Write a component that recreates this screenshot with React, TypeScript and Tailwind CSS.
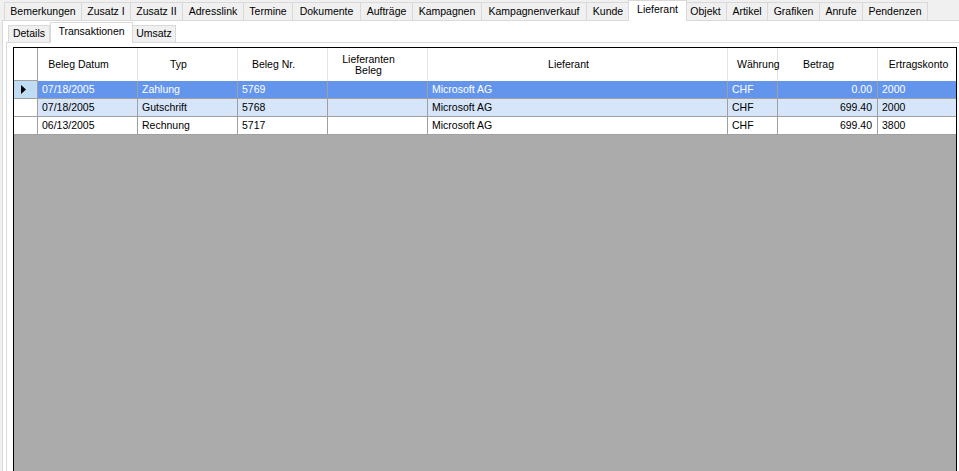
import React from "react";

const topTabs: [string, number][] = [
  ["Bemerkungen", 78],
  ["Zusatz I", 49],
  ["Zusatz II", 52],
  ["Adresslink", 61],
  ["Termine", 49],
  ["Dokumente", 68],
  ["Aufträge", 52],
  ["Kampagnen", 69],
  ["Kampagnenverkauf", 105],
  ["Kunde", 43],
  ["Lieferant", 55],
  ["Objekt", 42],
  ["Artikel", 41],
  ["Grafiken", 52],
  ["Anrufe", 43],
  ["Pendenzen", 65],
];

const innerTabs: [string, number][] = [
  ["Details", 42],
  ["Transaktionen", 83],
  ["Umsatz", 43],
];

// header cells: label, extra classes
const columns = [
  { label: "Beleg Datum", cls: "justify-center pr-[18px]" },
  { label: "Typ", cls: "justify-center pr-[18px]" },
  { label: "Beleg Nr.", cls: "justify-center pr-[18px]" },
  { label: "Lieferanten\nBeleg", cls: "justify-center pr-[18px]" },
  { label: "Lieferant", cls: "justify-center pr-[18px]" },
  { label: "Währung", cls: "justify-start pl-[9px]" },
  { label: "Betrag", cls: "justify-center pr-[18px]" },
  { label: "Ertragskonto", cls: "justify-center pr-[18px]" },
];

const rows = [
  ["07/18/2005", "Zahlung", "5769", "", "Microsoft AG", "CHF", "0.00", "2000"],
  ["07/18/2005", "Gutschrift", "5768", "", "Microsoft AG", "CHF", "699.40", "2000"],
  ["06/13/2005", "Rechnung", "5717", "", "Microsoft AG", "CHF", "699.40", "3800"],
];

const gridCols = "grid grid-cols-[24px_100px_100px_90px_100px_300px_50px_100px_100px]";

function RowArrow() {
  return (
    <svg width="5" height="9" viewBox="0 0 5 9">
      <path d="M0 0 L5 4.5 L0 9 Z" fill="#000" />
    </svg>
  );
}

export default function App() {
  return (
    <div
      className="w-[959px] h-[471px] overflow-hidden bg-[#F0F0F0] flex flex-col text-[10.5px] text-black"
      style={{ fontFamily: '"Liberation Sans", Arial, sans-serif' }}
    >
      {/* top tab strip */}
      <div className="h-[20px] shrink-0 flex items-end pl-[4px]">
        {topTabs.map(([label, w], i) =>
          label === "Lieferant" ? (
            <div
              key={label}
              style={{ width: w + 4 }}
              className="relative z-10 -mx-[2px] -mb-px h-[21px] bg-white border-l border-r border-t border-[#D9D9D9] flex items-center justify-center pb-[2px] whitespace-nowrap"
            >
              {label}
            </div>
          ) : (
            <div
              key={label}
              style={{ width: w }}
              className={
                "h-[18px] bg-[#F0F0F0] border-t border-r border-[#D9D9D9] flex items-center justify-center whitespace-nowrap " +
                (i === 0 ? "border-l" : "")
              }
            >
              {label}
            </div>
          )
        )}
      </div>

      {/* outer tab page */}
      <div className="flex-1 w-[965px] ml-[2px] bg-white border-l border-t border-[#D9D9D9] flex flex-col pl-[3px]">
        {/* inner tab strip */}
        <div className="h-[21px] shrink-0 flex items-end pl-[2px]">
          {innerTabs.map(([label, w], i) =>
            label === "Transaktionen" ? (
              <div
                key={label}
                style={{ width: w }}
                className="relative z-10 -mb-px h-[21px] bg-white border-l border-r border-t border-[#D9D9D9] flex items-center justify-center pb-[3px] whitespace-nowrap"
              >
                {label}
              </div>
            ) : (
              <div
                key={label}
                style={{ width: w }}
                className={
                  "h-[17px] bg-[#F0F0F0] border-t border-r border-[#D9D9D9] flex items-center justify-center whitespace-nowrap " +
                  (i === 0 ? "border-l" : "")
                }
              >
                {label}
              </div>
            )
          )}
        </div>

        {/* inner tab page */}
        <div className="flex-1 bg-white border-l border-t border-[#D9D9D9] pl-[6px] pt-[4px] flex flex-col">
          <div className="w-[944px] h-[480px] shrink-0 border border-black bg-[#ABABAB] overflow-hidden">
            {/* header */}
            <div className={gridCols + " h-[33px] bg-white"}>
              <div className="border-r border-b border-[#A0A0A0]" />
              {columns.map((c) => (
                <div
                  key={c.label}
                  className={
                    "flex items-center text-center whitespace-pre leading-[11px] border-r border-[#E3E3E3] " + c.cls
                  }
                >
                  {c.label}
                </div>
              ))}
            </div>

            {/* rows */}
            {rows.map((r, ri) => {
              const sel = ri === 0;
              const rowBg = sel ? "bg-[#6495ED] text-white" : ri === 1 ? "bg-[#D6E5F9]" : "bg-white";
              return (
                <div key={ri} className={gridCols + " h-[18px]"}>
                  <div
                    className={
                      "flex items-center justify-center pr-[4px] border-r border-b border-[#A0A0A0] " +
                      (sel ? "bg-[#BFDCF4]" : "bg-white")
                    }
                  >
                    {sel && <RowArrow />}
                  </div>
                  {r.map((v, ci) => (
                    <div
                      key={ci}
                      className={
                        "flex items-center whitespace-nowrap overflow-hidden border-r border-b border-[#A0A0A0] " +
                        rowBg +
                        (ci === 6 ? " justify-end pr-[5px]" : " pl-[4px]")
                      }
                    >
                      {v}
                    </div>
                  ))}
                </div>
              );
            })}
          </div>
        </div>
      </div>
    </div>
  );
}
